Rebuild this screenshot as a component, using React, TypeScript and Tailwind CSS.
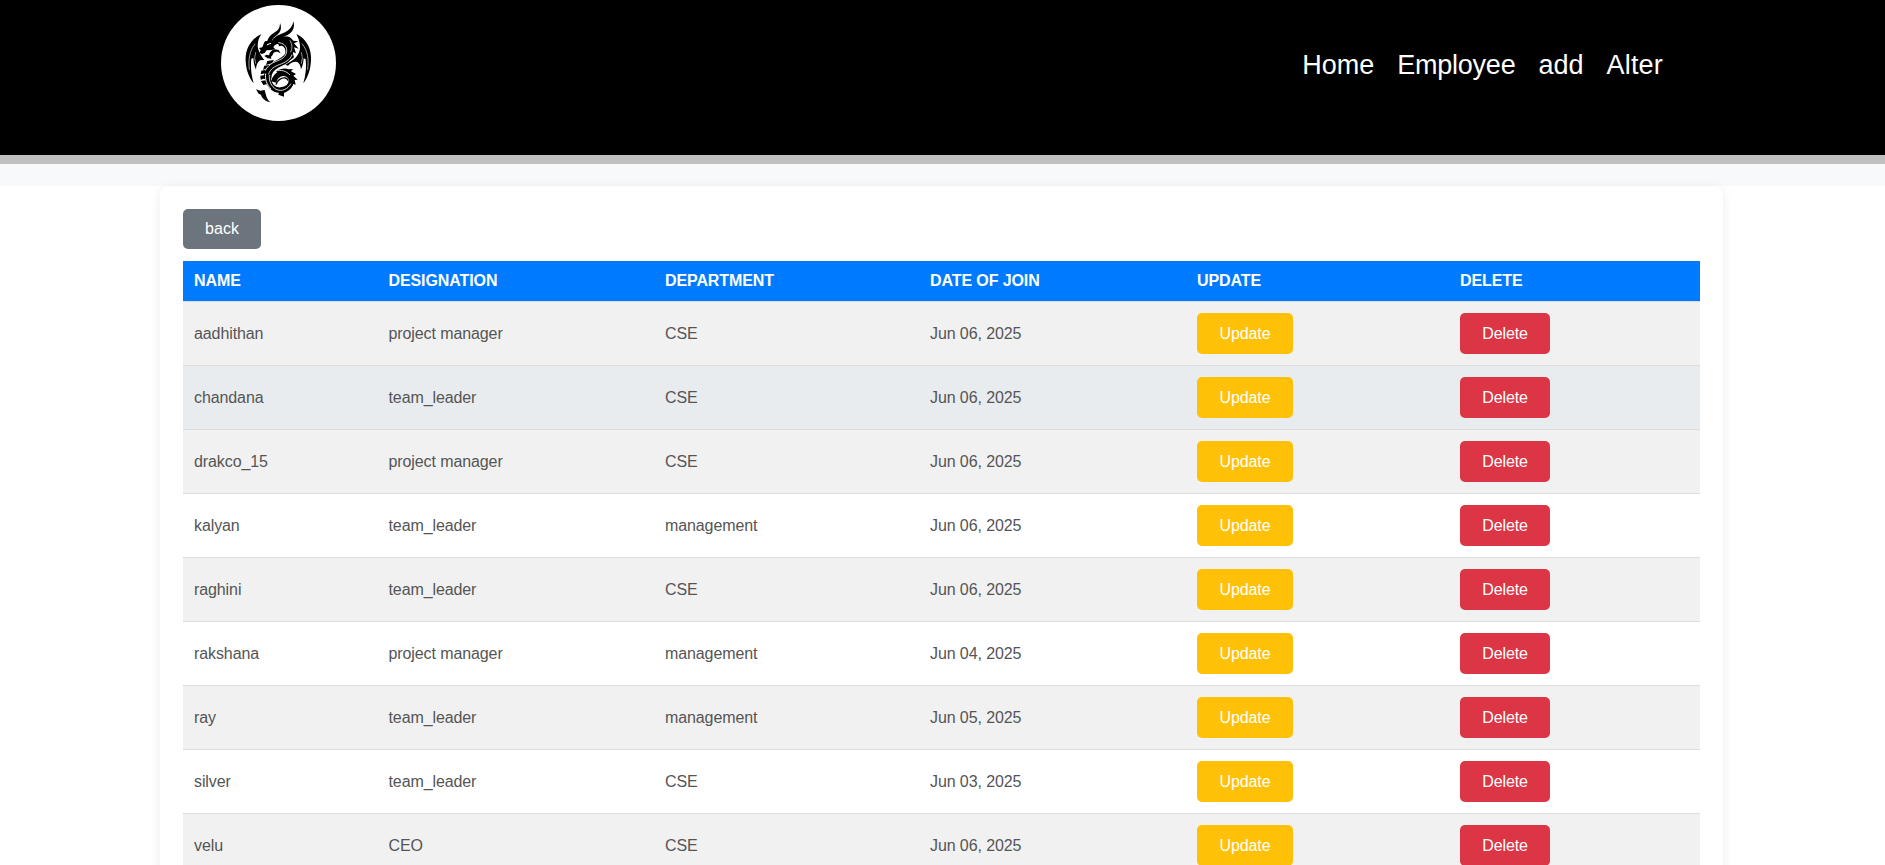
const links = [
  { label: "Home", tracking: "" },
  { label: "Employee", tracking: "tracking-[-0.25px]" },
  { label: "add", tracking: "" },
  { label: "Alter", tracking: "tracking-[0.2px]" },
];

const rows: [string, string, string, string][] = [
  ["aadhithan", "project manager", "CSE", "Jun 06, 2025"],
  ["chandana", "team_leader", "CSE", "Jun 06, 2025"],
  ["drakco_15", "project manager", "CSE", "Jun 06, 2025"],
  ["kalyan", "team_leader", "management", "Jun 06, 2025"],
  ["raghini", "team_leader", "CSE", "Jun 06, 2025"],
  ["rakshana", "project manager", "management", "Jun 04, 2025"],
  ["ray", "team_leader", "management", "Jun 05, 2025"],
  ["silver", "team_leader", "CSE", "Jun 03, 2025"],
  ["velu", "CEO", "CSE", "Jun 06, 2025"],
];

const headings = ["NAME", "DESIGNATION", "DEPARTMENT", "DATE OF JOIN", "UPDATE", "DELETE"];

const cell = "border-b border-[#ddd] px-[11px] py-0";

function rowColor(index: number) {
  if (index === 1) return "bg-[#e9ecef]";
  return index % 2 === 0 ? "bg-[#f1f1f1]" : "bg-white";
}

function DragonLogo() {
  return (
    <svg viewBox="33 15 345 348" className="h-[116px] w-[115px]" aria-hidden="true">
      <ellipse cx="205.500" cy="189" rx="172.500" ry="174" fill="#fff" />
      {/* horns */}
      <path d="M171 126C176 107 189 101 199 94C207 88 210 80 210 69C216 84 212 96 202 104C193 110 187 115 184 127Z" />
      <path d="M186 122C195 107 212 103 225 97C239 90 248 79 250 64C256 82 248 97 233 105C219 112 205 113 196 124Z" />
      {/* head */}
      <path d="M166 123L184 124L200 113C216 106 232 108 240 116L236 128L214 132C200 130 194 134 190 142L196 148L184 150L170 151L164 159L155 162L148 158L152 151L147 144L157 142C161 134 160 129 166 123Z" />
      <path d="M163 168L169 164L177 166C178 157 185 150 194 148L206 150L212 160C205 155 198 154 193 157C188 161 189 167 183 170L184 176L173 175Z" />
      {/* mane and spine spikes */}
      <path d="M226 110C240 108 244 116 250 122L265 124L252 130L266 146L252 142L258 160L247 155L252 172L242 180L228 160Z" />
      <path d="M198 214C214 203 228 204 236 208L249 207L243 214L258 222L250 227L263 239L254 240L257 254L248 251C247 263 236 273 222 279L222 290L205 284L208 268C230 270 244 258 244 240C242 224 222 214 206 222Z" />
      {/* body */}
      <g fill="none" stroke="#000">
        <path d="M203 128C222 120 240 136 238 158C236 182 208 186 192 198C178 208 172 220 173 236" strokeWidth="23" />
        <path d="M173 232C175 254 190 272 212 270C232 268 244 256 244 240C244 226 226 216 210 222C200 226 194 234 191 246" strokeWidth="16" />
        <path d="M234 242C232 232 219 231 209 238C203 242 199 247 198 254" strokeWidth="4" />
      </g>
      {/* belly scales */}
      <path d="M172 183L192 180L186 190L168 195ZM163 197L181 194L173 205L159 209ZM154 212L172 208L166 220L152 223ZM151 227L166 225L166 235L152 239ZM153 243L167 241L173 252L160 255Z" />
      {/* tail tip */}
      <path d="M138 268L151 272L164 270L167 281C169 292 173 299 181 307C166 303 156 296 153 284L146 281Z" />
      {/* left wing */}
      <path d="M154 102C122 117 105 148 107 183C108 208 116 232 131 250C124 226 121 202 124 176L130 174C131 187 133 198 138 209C138 197 142 187 150 181L163 180C150 164 144 149 143 139C143 124 147 112 154 102Z" />
      {/* right wing */}
      <path d="M259 102C290 117 305 146 303 181C302 208 294 232 280 250C287 226 290 202 287 178L281 175C280 188 278 198 273 208C272 197 268 190 262 186C252 183 243 188 234 197L226 194L249 180C265 168 271 152 270 138C269 123 264 111 259 102Z" />
      {/* highlights between the muscle lines */}
      <g fill="none" stroke="#fff" strokeLinecap="round" strokeWidth="2.500">
        <path d="M166 211C174 195 188 188 203 182C221 175 231 166 230 149C229 137 220 129 206 128" />
        <path d="M176 222C180 207 194 199 208 194C226 187 240 180 246 165" />
        <path d="M167 222C164 236 170 254 182 266" strokeWidth="3" />
        <path d="M178 226C176 243 184 259 198 268C214 276 234 268 242 252" />
        <path d="M198 213C212 208 230 213 239 224" />
        <path d="M172 134L182 130" strokeWidth="3" />
        <path d="M240 122C248 134 247 146 242 156" strokeWidth="2" />
        <path d="M135 132C119 152 114 178 118 208M137 158C132 180 134 170 137 190" strokeWidth="2.500" stroke="#bbb" />
        <path d="M277 132C293 152 297 178 293 208M274 158C279 180 277 170 274 190" strokeWidth="2.500" stroke="#bbb" />
      </g>
    </svg>
  );
}

export default function App() {
  return (
    <div className="h-[865px] overflow-hidden bg-white font-['Liberation_Sans',Arial,sans-serif] text-base">
      <header className="flex h-[164px] items-start justify-between border-b-[9px] border-[#c0c0c0] bg-black pt-[5px] pr-[222px] pl-[221px]">
        <DragonLogo />
        <nav className="flex gap-[23px] pt-10 text-[27px] leading-10 text-white">
          {links.map(({ label, tracking }) => (
            <a key={label} href="#" className={tracking}>{label}</a>
          ))}
        </nav>
      </header>
      <div className="h-[22px] bg-[#f8f9fa]" />
      <main className="mr-[162px] ml-40 rounded-[9px] bg-white p-[23px] shadow-[0_2px_11px_rgba(0,0,0,0.08)]">
        <button className="mb-3 block h-10 w-[78px] rounded-[5px] bg-[#6c757d] text-white">back</button>
        <table className="w-[1517px] table-fixed border-separate border-spacing-0 text-left tracking-[-0.1px] text-[#555]">
          <colgroup>
            <col className="w-[194.500px]" />
            <col className="w-[276.500px]" />
            <col className="w-[265px]" />
            <col className="w-[267px]" />
            <col className="w-[263px]" />
            <col className="w-[251px]" />
          </colgroup>
          <thead>
            <tr className="h-[41px] bg-[#007bff] text-white">
              {headings.map((heading) => (
                <th key={heading} className={`${cell} font-bold`}>{heading}</th>
              ))}
            </tr>
          </thead>
          <tbody>
            {rows.map(([name, designation, department, joined], index) => (
              <tr key={name} className={`h-16 ${rowColor(index)}`}>
                <td className={cell}>{name}</td>
                <td className={cell}>{designation}</td>
                <td className={cell}>{department}</td>
                <td className={cell}>{joined}</td>
                <td className={cell}>
                  <button className="block h-[41px] w-24 rounded-[5px] bg-[#ffc107] text-white">Update</button>
                </td>
                <td className={cell}>
                  <button className="block h-[41px] w-[90px] rounded-[5px] bg-[#dc3545] text-white">Delete</button>
                </td>
              </tr>
            ))}
          </tbody>
        </table>
      </main>
    </div>
  );
}
